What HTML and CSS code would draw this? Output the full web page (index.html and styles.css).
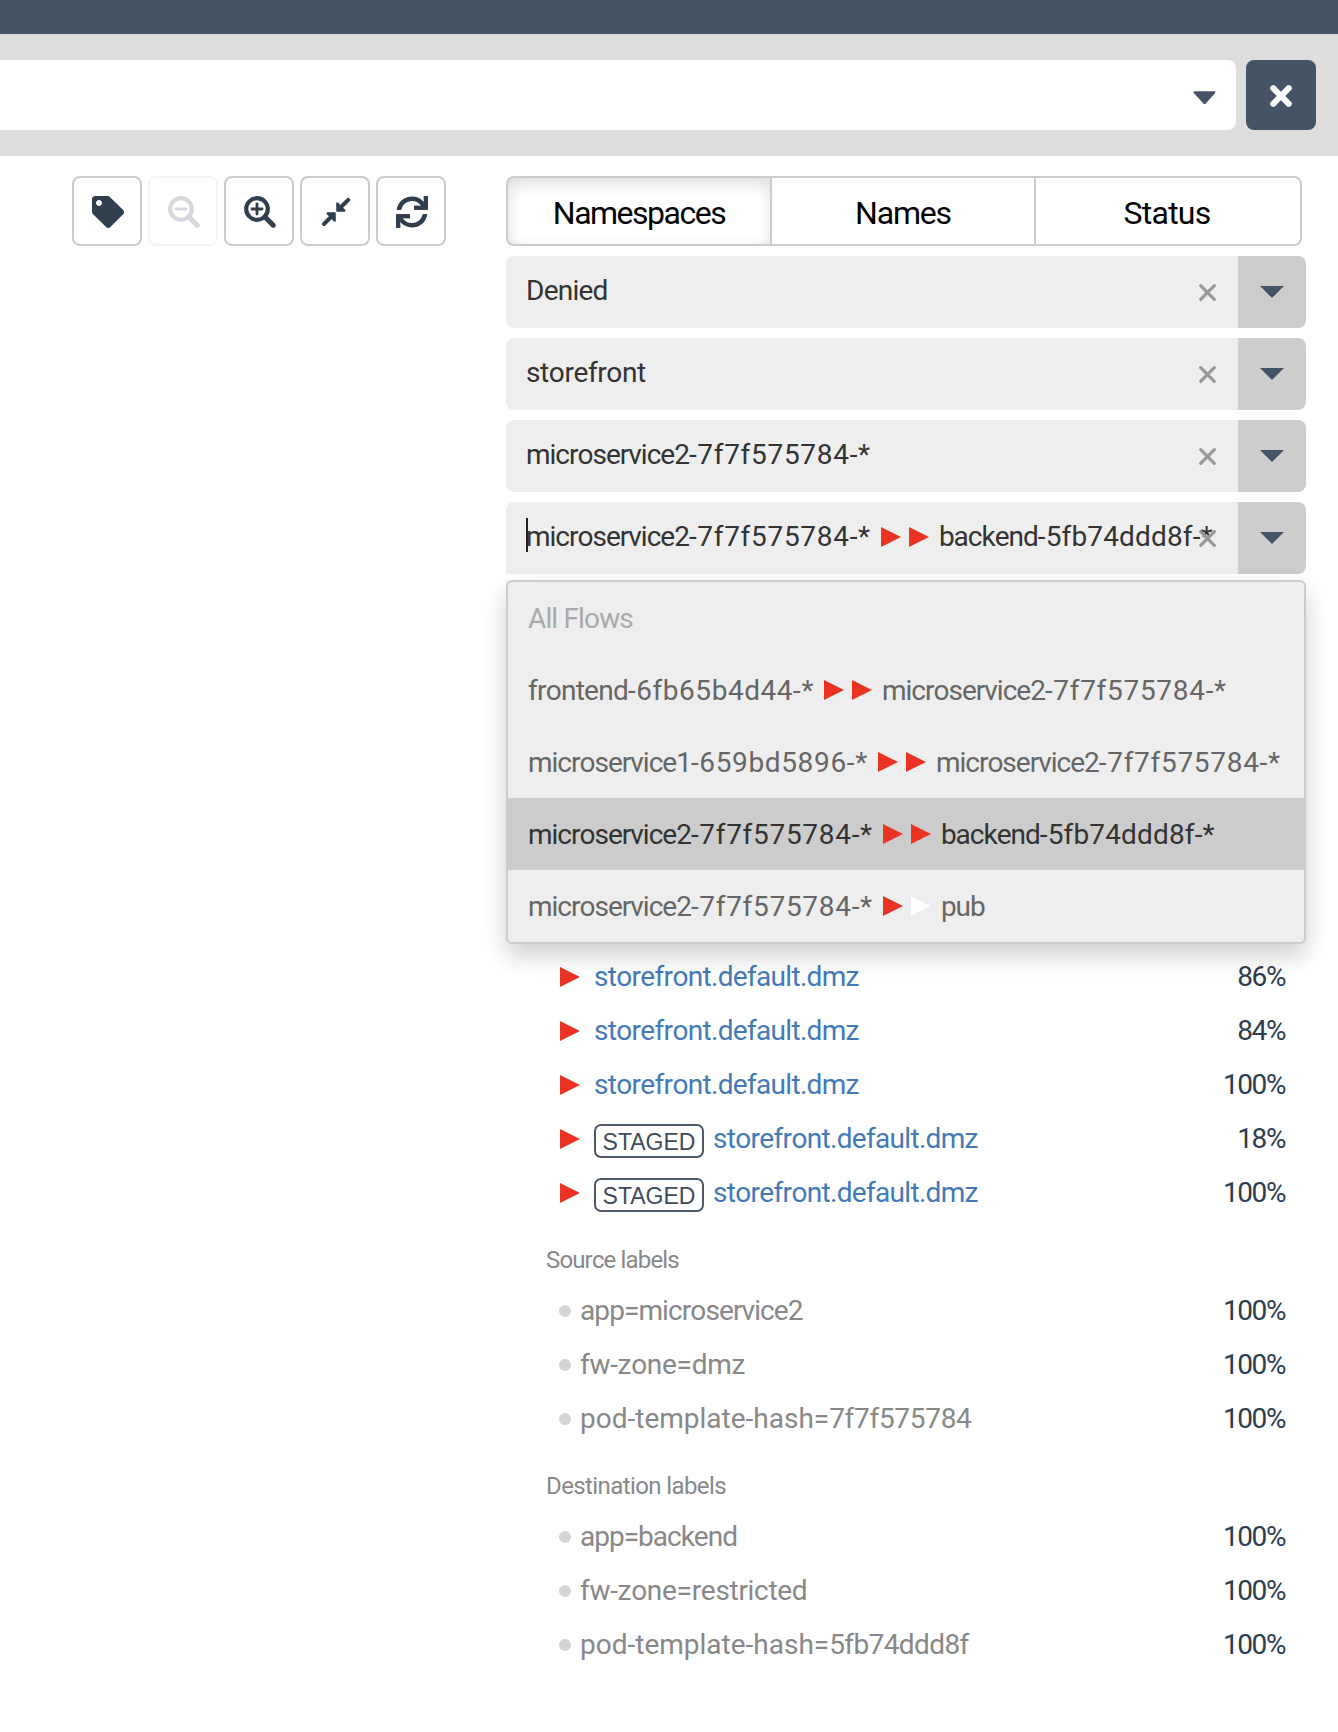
FILE: index.html
```html
<!DOCTYPE html>
<html lang="en">
<head>
<meta charset="utf-8">
<title>Flow Visualization</title>
<link rel="stylesheet" href="styles.css">
</head>
<body>
<svg width="0" height="0" class="defs">
  <symbol id="tri" viewBox="0 0 20 20"><path d="M0 0L20 10L0 20z" fill="currentColor"/></symbol>
  <symbol id="caret" viewBox="0 0 24 12"><path d="M0 0H24L12 12z" fill="currentColor"/></symbol>
  <symbol id="cross" viewBox="0 0 16 16"><path d="M1.6 1.6L14.4 14.4M14.4 1.6L1.6 14.4" stroke="currentColor" stroke-width="3" stroke-linecap="round"/></symbol>
</svg>
<header class="topbar"></header>
<div class="filterbar">
  <div class="filter-input">
    <svg class="filter-caret" viewBox="0 0 24 14"><path d="M1.3 0H22.7Q24 .6 23.2 1.8L13 13.1Q12 14 11 13.1L.8 1.8Q0 .6 1.3 0z" fill="#445466"/></svg>
  </div>
  <button class="filter-clear"><svg width="22" height="22" viewBox="0 0 22 22"><path d="M3.2 3.2L18.8 18.8M18.8 3.2L3.2 18.8" stroke="#fff" stroke-width="6" stroke-linecap="round"/></svg></button>
</div>
<main class="main">
  <div class="toolbar">
    <button class="tool"><svg viewBox="0 0 512 512"><path fill="currentColor" d="M0 252.118V48C0 21.49 21.49 0 48 0h204.118a48 48 0 0 1 33.941 14.059l211.882 211.882c18.745 18.745 18.745 49.137 0 67.882L293.823 497.941c-18.745 18.745-49.137 18.745-67.882 0L14.059 286.059A48 48 0 0 1 0 252.118zM112 64c-26.51 0-48 21.49-48 48s21.49 48 48 48 48-21.49 48-48-21.49-48-48-48z"/></svg></button>
    <button class="tool disabled"><svg viewBox="0 0 32 32" fill="none" stroke="currentColor"><circle cx="13" cy="13" r="10.8" stroke-width="4.2"/><path d="M21 21L29.2 29.2" stroke-width="5" stroke-linecap="round"/><path d="M8 13H18" stroke-width="2.8" stroke-linecap="round"/></svg></button>
    <button class="tool"><svg viewBox="0 0 32 32" fill="none" stroke="currentColor"><circle cx="13" cy="13" r="10.8" stroke-width="4.2"/><path d="M21 21L29.2 29.2" stroke-width="5" stroke-linecap="round"/><path d="M8 13H18M13 8V18" stroke-width="2.8" stroke-linecap="round"/></svg></button>
    <button class="tool"><svg viewBox="0 0 32 32" fill="currentColor"><path d="M22 10L28.2 3.8M10 22L4 28" stroke="currentColor" stroke-width="4" stroke-linecap="round"/><path d="M16.2 7.2Q16.6 5.4 18.2 6.8L25.4 14Q26.2 15.6 24.6 15.8H17.4Q16.2 15.8 16.2 14.6zM15.8 24.8Q15.4 26.6 13.8 25.2L6.6 18Q5.8 16.4 7.4 16.2H14.6Q15.8 16.2 15.8 17.4z"/></svg></button>
    <button class="tool"><svg viewBox="0 0 512 512"><path fill="currentColor" d="M440.65 12.57l4 82.77A247.16 247.16 0 0 0 255.83 8C134.73 8 33.91 94.92 12.29 209.82A12 12 0 0 0 24.09 224h49.05a12 12 0 0 0 11.67-9.26 175.91 175.91 0 0 1 317-56.94l-101.46-4.86a12 12 0 0 0-12.57 12v47.41a12 12 0 0 0 12 12H500a12 12 0 0 0 12-12V12a12 12 0 0 0-12-12h-47.37a12 12 0 0 0-11.98 12.57zM255.83 432a175.61 175.61 0 0 1-146-77.8l101.8 4.87a12 12 0 0 0 12.57-12v-47.4a12 12 0 0 0-12-12H12a12 12 0 0 0-12 12V500a12 12 0 0 0 12 12h47.35a12 12 0 0 0 12-12.6l-4.15-82.57A247.17 247.17 0 0 0 255.83 504c121.11 0 221.93-86.92 243.55-201.82a12 12 0 0 0-11.8-14.18h-49.05a12 12 0 0 0-11.67 9.26A175.86 175.86 0 0 1 255.83 432z"/></svg></button>
  </div>
  <section class="panel">
    <div class="tabs">
      <div class="tab active"><span class="k15">Namespaces</span></div>
      <div class="tab"><span class="k12">Names</span></div>
      <div class="tab"><span class="k7">Status</span></div>
    </div>
    <div class="selects">
      <div class="select"><div class="value"><span class="k7">Denied</span><svg class="clear"><use href="#cross"/></svg></div><div class="arrow"><svg><use href="#caret"/></svg></div></div>
      <div class="select"><div class="value"><span class="k4">storefront</span><svg class="clear"><use href="#cross"/></svg></div><div class="arrow"><svg><use href="#caret"/></svg></div></div>
      <div class="select"><div class="value"><span class="k10">microservice2</span><span class="w7">-7f7f575784-*</span><svg class="clear"><use href="#cross"/></svg></div><div class="arrow"><svg><use href="#caret"/></svg></div></div>
      <div class="select open"><div class="value"><i class="cursor"></i><span class="k10">microservice2</span><span class="w7">-7f7f575784-*</span><span class="flow"><svg class="tri"><use href="#tri"/></svg><svg class="tri"><use href="#tri"/></svg></span><span class="k10">backend</span><span class="w1">-5fb74ddd8f-*</span><svg class="clear"><use href="#cross"/></svg></div><div class="arrow"><svg><use href="#caret"/></svg></div>
        <div class="menu">
          <div class="item muted"><span class="k8">All Flows</span></div>
          <div class="item"><span class="k7">frontend</span><span class="w5">-6fb65b4d44-*</span><span class="flow"><svg class="tri"><use href="#tri"/></svg><svg class="tri"><use href="#tri"/></svg></span><span class="k10">microservice2</span><span class="w7">-7f7f575784-*</span></div>
          <div class="item"><span class="k10">microservice1</span><span class="w6">-659bd5896-*</span><span class="flow"><svg class="tri"><use href="#tri"/></svg><svg class="tri"><use href="#tri"/></svg></span><span class="k10">microservice2</span><span class="w7">-7f7f575784-*</span></div>
          <div class="item selected"><span class="k10">microservice2</span><span class="w7">-7f7f575784-*</span><span class="flow"><svg class="tri"><use href="#tri"/></svg><svg class="tri"><use href="#tri"/></svg></span><span class="k10">backend</span><span class="w1">-5fb74ddd8f-*</span></div>
          <div class="item"><span class="k10">microservice2</span><span class="w7">-7f7f575784-*</span><span class="flow"><svg class="tri"><use href="#tri"/></svg><svg class="tri white"><use href="#tri"/></svg></span><span class="k10">pub</span></div>
        </div>
      </div>
    </div>
    <div class="details">
      <div class="row"><svg class="tri"><use href="#tri"/></svg><a class="link">storefront.default.dmz</a><b class="pct">86%</b></div>
      <div class="row"><svg class="tri"><use href="#tri"/></svg><a class="link">storefront.default.dmz</a><b class="pct">84%</b></div>
      <div class="row"><svg class="tri"><use href="#tri"/></svg><a class="link">storefront.default.dmz</a><b class="pct">100%</b></div>
      <div class="row"><svg class="tri"><use href="#tri"/></svg><span class="staged">STAGED</span><a class="link">storefront.default.dmz</a><b class="pct">18%</b></div>
      <div class="row"><svg class="tri"><use href="#tri"/></svg><span class="staged">STAGED</span><a class="link">storefront.default.dmz</a><b class="pct">100%</b></div>
      <h3 class="heading k8">Source labels</h3>
      <div class="row label"><i class="dot"></i><span class="k9">app=microservice2</span><b class="pct">100%</b></div>
      <div class="row label"><i class="dot"></i><span class="k3">fw-zone=dmz</span><b class="pct">100%</b></div>
      <div class="row label"><i class="dot"></i><span>pod-template-hash=</span><span class="k3">7f7f575784</span><b class="pct">100%</b></div>
      <h3 class="heading k6">Destination labels</h3>
      <div class="row label"><i class="dot"></i><span class="k10">app=backend</span><b class="pct">100%</b></div>
      <div class="row label"><i class="dot"></i><span class="k3">fw-zone=restricted</span><b class="pct">100%</b></div>
      <div class="row label"><i class="dot"></i><span>pod-template-hash=</span><span class="k6">5fb74ddd8f</span><b class="pct">100%</b></div>
    </div>
  </section>
</main>
</body>
</html>
```
FILE: styles.css
```css
* { box-sizing: border-box; }
body {
  margin: 0;
  min-height: 1732px;
  background: #fff;
  font: 28px/34px Roboto, sans-serif;
  color: #333;
  font-kerning: none;
}
svg { display: block; flex: none; }
.defs { position: absolute; }
button { padding: 0; cursor: pointer; }

/* Header */
.topbar { height: 34px; background: #445466; }
.filterbar {
  display: flex;
  gap: 10px;
  height: 122px;
  padding: 26px 22px 26px 0;
  background: #ddd;
}
.filter-input {
  flex: 1;
  display: flex;
  align-items: center;
  justify-content: flex-end;
  padding: 5px 20px 0 0;
  background: #fff;
  border-radius: 0 8px 8px 0;
}
.filter-caret { width: 23px; height: 14px; }
.filter-clear {
  display: flex;
  align-items: center;
  justify-content: center;
  width: 70px;
  padding-top: 2px;
  border: 0;
  border-radius: 8px;
  background: #445466;
}

/* Toolbar */
.main { display: flex; padding: 20px 32px 0 72px; }
.toolbar { display: flex; gap: 6px; height: 70px; margin-right: 60px; }
.tool {
  display: flex;
  align-items: center;
  justify-content: center;
  width: 70px;
  height: 70px;
  padding: 2px 0 0 2px;
  border: 2px solid #ccc;
  border-radius: 8px;
  background: #fff;
  color: #303e4e;
}
.tool svg { width: 32px; height: 32px; }
.tool.disabled { opacity: .2; }

/* Tabs */
.panel { width: 800px; }
.tabs {
  display: grid;
  grid-template-columns: 264px 264px 264px;
  width: 796px;
  height: 70px;
  border: 2px solid #ccc;
  border-radius: 8px;
  overflow: hidden;
}
.tab {
  display: flex;
  align-items: center;
  justify-content: center;
  padding: 4px 2px 0 0;
  font-size: 32px;
  color: #000;
}
.tab + .tab { border-left: 2px solid #ccc; margin-left: -2px; }
.tab.active { box-shadow: inset 0 6px 16px rgba(0, 0, 0, .14); }

/* Selects */
.selects { display: grid; gap: 10px; margin-top: 10px; }
.select { position: relative; display: flex; height: 72px; }
.value {
  position: relative;
  flex: 1;
  display: flex;
  align-items: center;
  padding: 0 0 3px 20px;
  background: #eee;
  border-radius: 8px 0 0 8px;
  white-space: nowrap;
}
.value > span:not(.flow), .item > span:not(.flow) { padding-top: 1px; }
.arrow {
  display: flex;
  align-items: center;
  justify-content: center;
  width: 68px;
  background: #ccc;
  border-radius: 0 8px 8px 0;
  color: #445466;
}
.arrow svg { width: 24px; height: 12px; }
.clear { position: absolute; right: 22px; top: 28px; width: 17px; height: 17px; color: #999; }
.open .value { border-bottom-left-radius: 0; }
.cursor { position: absolute; left: 20px; top: 16px; width: 2px; height: 34px; background: #222; }

/* Menu */
.menu {
  position: absolute;
  z-index: 2;
  left: 0;
  top: 78px;
  width: 800px;
  border: 2px solid #ccc;
  border-radius: 6px;
  background: #eee;
  box-shadow: 0 12px 24px rgba(0, 0, 0, .19);
}
.item {
  display: flex;
  align-items: center;
  height: 72px;
  padding-left: 20px;
  color: #666;
  white-space: nowrap;
}
.item.muted { color: #aaa; }
.item.selected { background: #ccc; color: #333; }
.flow { display: flex; gap: 8px; margin: 0 10px 0 10px; }
.tri { width: 20px; height: 20px; color: #eb3323; }
.tri.white { color: #fff; }

/* Details */
.details { padding: 376px 21px 0 54px; }
.row { display: flex; align-items: center; height: 54px; white-space: nowrap; }
.row .tri { margin: -1px 14px 0 0; }
.link { color: #447ab7; letter-spacing: -.68px; }
.pct { margin-left: auto; font-weight: 400; color: #2e3d4e; letter-spacing: -1.4px; }
.staged {
  width: 110px;
  height: 34px;
  margin: 3px 9px 0 0;
  border: 2px solid #4d5a69;
  border-radius: 7px;
  font: 23px/33px "Liberation Sans", sans-serif;
  text-align: center;
  color: #3f4c5b;
}
.heading {
  height: 64px;
  margin: 0 0 0 -14px;
  padding-top: 16px;
  font-size: 24px;
  font-weight: 400;
  line-height: 48px;
  color: #888;
}
.label { color: #888; }
.dot { width: 12px; height: 12px; margin: -1px 9px 0 -1px; border-radius: 50%; background: #d4d4d4; }

/* Tracking */
.k3 { letter-spacing: -.3px; }
.k4 { letter-spacing: -.4px; }
.k6 { letter-spacing: -.6px; }
.k7 { letter-spacing: -.75px; }
.k8 { letter-spacing: -.85px; }
.k9 { letter-spacing: -.9px; }
.k10 { letter-spacing: -1px; }
.k12 { letter-spacing: -1.2px; }
.k15 { letter-spacing: -1.5px; }
.w1 { letter-spacing: .15px; }
.w5 { letter-spacing: .55px; }
.w6 { letter-spacing: .65px; }
.w7 { letter-spacing: .7px; }
```
